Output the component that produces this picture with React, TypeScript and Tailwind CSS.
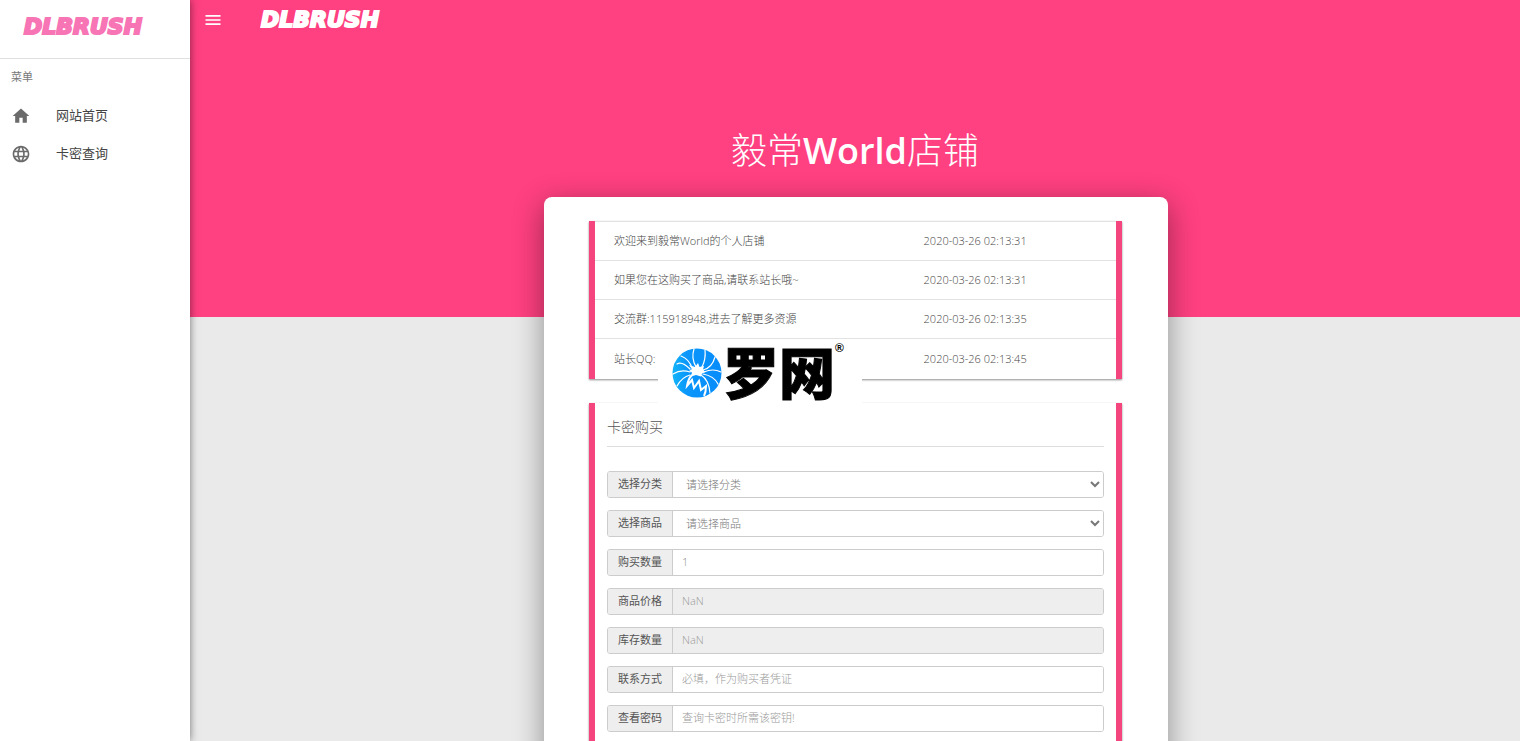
import { useState } from "react";
import { MdHome, MdLanguage, MdMenu } from "react-icons/md";

const notices = [
  { text: "欢迎来到毅常World的个人店铺", time: "2020-03-26 02:13:31" },
  { text: "如果您在这购买了商品,请联系站长哦~", time: "2020-03-26 02:13:31" },
  { text: "交流群:115918948,进去了解更多资源", time: "2020-03-26 02:13:35" },
  { text: "站长QQ:", time: "2020-03-26 02:13:45" },
];

function Brand({ className }: { className: string }) {
  return (
    <a
      href="#"
      className={
        "block font-['DejaVu_Sans','Liberation_Sans',sans-serif] text-[22px] leading-6 font-bold italic " +
        className
      }
    >
      DLBRUSH
    </a>
  );
}

function Sidebar() {
  return (
    <aside className="relative z-10 w-[190px] shrink-0 bg-white shadow-[0_0_8px_rgba(0,0,0,0.5)]">
      <div className="flex h-[59px] items-center border-b border-[#e0e0e0] px-6 pb-1">
        <Brand className="text-[#f774b5] [-webkit-text-stroke:2px_#f774b5] [text-shadow:-1px_1px_0_#f9a3ce]" />
      </div>
      <h2 className="px-[11px] pt-2.5 text-[11px] leading-4 text-[#777]">菜单</h2>
      <nav className="mt-3 flex flex-col text-[13px] text-[#444]">
        <a href="#" className="flex h-[38px] items-center gap-[25px] px-[11px]">
          <MdHome className="size-5 text-[#6b6b6b]" />
          网站首页
        </a>
        <a href="#" className="flex h-[38px] items-center gap-[25px] px-[11px]">
          <MdLanguage className="size-5 text-[#6b6b6b]" />
          卡密查询
        </a>
      </nav>
    </aside>
  );
}

function Watermark() {
  return (
    <div className="absolute top-[119px] left-[63px] flex h-[63px] w-[204px] items-center bg-white pl-3.5 text-black">
      <svg viewBox="0 0 50 50" className="mt-0.5 size-[50px] shrink-0" aria-hidden="true">
        <defs>
          <linearGradient id="disc" x1="0" x2="1" y1="0" y2="0">
            <stop offset="0" stopColor="#12b4f8" />
            <stop offset="0.3" stopColor="#0a96fb" />
            <stop offset="1" stopColor="#078cfa" />
          </linearGradient>
        </defs>
        <circle cx="25" cy="25" r="24.5" fill="url(#disc)" />
        <path
          d="M26 15l1.500 4 4.500-1-1 3.500 2.500 2.500-3.500 1.500-1 3-5-1.500-5 1.500 1-4-3-1.500 3-2-3-4 6 2z"
          fill="#fff"
        />
        <g fill="none" stroke="#fff" strokeWidth="1.2" strokeLinecap="round">
          <path d="M24 19Q19 10 22 1M30 19Q34 11 33 2M31 22Q40 20 43 9M32 24Q41 20 49 24M31 26Q42 28 46 36M29 27Q37 32 38 45" />
          <path d="M20 20Q17 11 9 8M18 21Q10 13 5 16M18 24Q9 21 1 26M18 27Q10 29 5 38" />
        </g>
        <path
          d="M20 27Q16 31 15 38L20 32L22 40L27 33L29 42L34 38Q34 44 32 48"
          fill="none"
          stroke="#fff"
          strokeWidth="2"
        />
      </svg>
      <span className="mb-1 ml-px font-['Noto_Sans_CJK_SC',sans-serif] text-[56px] leading-[56px] font-black [-webkit-text-stroke:1px_#000]">
        罗网
      </span>
      <span className="self-start pt-0.5 font-['Liberation_Sans',sans-serif] text-[12px] leading-3 font-bold">
        ®
      </span>
    </div>
  );
}

const panel =
  "border-x-[6px] border-[#f5457f] bg-white shadow-[0_1px_2px_rgba(0,0,0,0.45)]";
const row = "flex h-[27px] rounded-[3px] border border-[#ccc] overflow-hidden";
const label =
  "flex w-[65px] shrink-0 items-center justify-center border-r border-[#ccc] bg-[#eee] font-normal text-[#555]";
const field =
  "min-w-0 flex-1 bg-white px-[9px] text-[#888] outline-none placeholder:text-[#999] disabled:bg-[#eee] disabled:text-[#999]";

function SelectRow({ id, name, hint }: { id: string; name: string; hint: string }) {
  return (
    <div className={row}>
      <label htmlFor={id} className={label}>
        {name}
      </label>
      <select id={id} className="min-w-0 flex-1 bg-white pl-[9px] text-[#777] outline-none">
        <option>{hint}</option>
      </select>
    </div>
  );
}

function PurchaseForm() {
  const [amount, setAmount] = useState("1");
  return (
    <form className={panel + " mt-6 px-3 pb-10"}>
      <h2 className="border-b border-[#ddd] pt-3.5 pb-[9px] text-[14px] leading-5 text-[#555]">
        卡密购买
      </h2>
      <div className="mt-6 flex flex-col gap-3">
        <SelectRow id="category" name="选择分类" hint="请选择分类" />
        <SelectRow id="product" name="选择商品" hint="请选择商品" />
        <div className={row}>
          <label htmlFor="amount" className={label}>购买数量</label>
          <input
            id="amount"
            className={field}
            value={amount}
            onChange={(e) => setAmount(e.target.value)}
          />
        </div>
        <div className={row}>
          <label htmlFor="price" className={label}>商品价格</label>
          <input id="price" className={field} value="NaN" disabled />
        </div>
        <div className={row}>
          <label htmlFor="stock" className={label}>库存数量</label>
          <input id="stock" className={field} value="NaN" disabled />
        </div>
        <div className={row}>
          <label htmlFor="contact" className={label}>联系方式</label>
          <input id="contact" className={field} placeholder="必填，作为购买者凭证" />
        </div>
        <div className={row}>
          <label htmlFor="password" className={label}>查看密码</label>
          <input id="password" className={field} placeholder="查询卡密时所需该密钥!" />
        </div>
      </div>
    </form>
  );
}

export default function App() {
  return (
    <div className="flex h-screen overflow-hidden bg-[#eaeaea] font-['Open_Sans','Noto_Sans_CJK_SC',sans-serif]">
      <Sidebar />
      <main className="min-w-0 flex-1 overflow-y-auto [scrollbar-width:none]">
        <div className="h-[317px] bg-[#ff4081] text-white">
          <header className="flex h-10 items-center gap-[38px] px-[13px]">
            <button type="button" aria-label="菜单">
              <MdMenu className="size-5" />
            </button>
            <Brand className="[-webkit-text-stroke:2px_#fff] [text-shadow:-1px_1px_0_#ffc4d8]" />
          </header>
          <h1 className="mt-[84px] text-center text-[36px] leading-[54px] font-light">
            毅常<span className="font-semibold">World</span>店铺
          </h1>
        </div>
        <div className="-mt-[120px] pl-0.5">
          <div className="mx-auto max-w-[624px] rounded-lg bg-white py-6 pr-[46px] pl-[45px] text-[11px] font-light shadow-[0_8px_30px_rgba(0,0,0,0.4)]">
            <section className={panel + " relative pb-px"}>
              <table className="w-full table-fixed text-left text-[#444]">
                <tbody>
                  {notices.map((n, i) => (
                    <tr key={i} className="h-[39px] border-t border-[#e2e2e2]">
                      <td className="w-3/5 pt-px pl-[19px]">{n.text}</td>
                      <td className="pt-px pl-4">{n.time}</td>
                    </tr>
                  ))}
                </tbody>
              </table>
              <Watermark />
            </section>
            <PurchaseForm />
          </div>
        </div>
      </main>
    </div>
  );
}
